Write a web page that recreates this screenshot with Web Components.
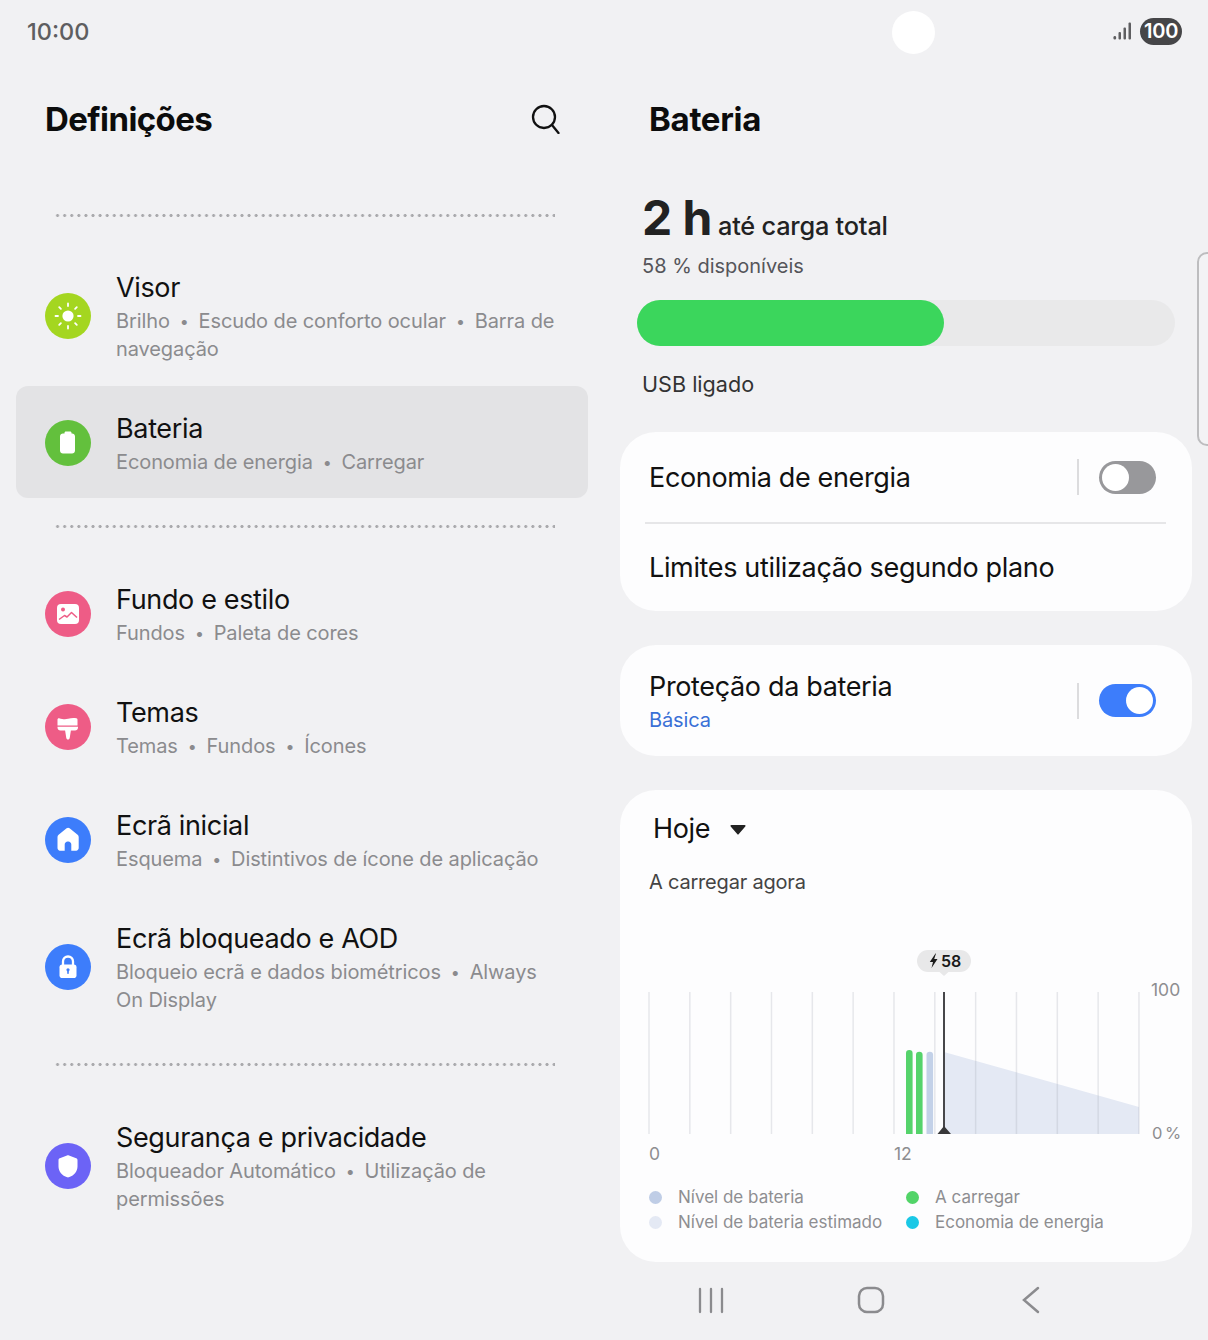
<!doctype html>
<html lang="pt">
<head>
<meta charset="utf-8">
<title>Definições</title>
<style>
  html,body{margin:0;background:#f1f1f3}
  body{font-family:Inter,"Noto Sans",sans-serif}
  settings-row i{font-style:normal;font-size:16px;line-height:1;margin:0 5.500px;vertical-align:1px}
</style>
</head>
<body>
<app-shell>
  <status-bar slot="status"></status-bar>

  <settings-pane slot="left">
    <dot-divider first></dot-divider>
    <settings-row>
      <round-icon slot="icon" kind="sun" color="#a4d620"></round-icon>
      <span slot="title">Visor</span>
      <span slot="sub">Brilho<i>&nbsp;•&nbsp;</i>Escudo de conforto ocular<i>&nbsp;•&nbsp;</i>Barra de<br>navegação</span>
    </settings-row>
    <settings-row selected>
      <round-icon slot="icon" kind="battery" color="#63c03d"></round-icon>
      <span slot="title">Bateria</span>
      <span slot="sub">Economia de energia<i>&nbsp;•&nbsp;</i>Carregar</span>
    </settings-row>
    <dot-divider></dot-divider>
    <settings-row>
      <round-icon slot="icon" kind="picture" color="#ee5c86"></round-icon>
      <span slot="title">Fundo e estilo</span>
      <span slot="sub">Fundos<i>&nbsp;•&nbsp;</i>Paleta de cores</span>
    </settings-row>
    <settings-row>
      <round-icon slot="icon" kind="brush" color="#ee5c86"></round-icon>
      <span slot="title">Temas</span>
      <span slot="sub">Temas<i>&nbsp;•&nbsp;</i>Fundos<i>&nbsp;•&nbsp;</i>Ícones</span>
    </settings-row>
    <settings-row>
      <round-icon slot="icon" kind="home" color="#3d7dfb"></round-icon>
      <span slot="title">Ecrã inicial</span>
      <span slot="sub">Esquema<i>&nbsp;•&nbsp;</i>Distintivos de ícone de aplicação</span>
    </settings-row>
    <settings-row>
      <round-icon slot="icon" kind="lock" color="#3d7dfb"></round-icon>
      <span slot="title">Ecrã bloqueado e AOD</span>
      <span slot="sub">Bloqueio ecrã e dados biométricos<i>&nbsp;•&nbsp;</i>Always<br>On Display</span>
    </settings-row>
    <dot-divider></dot-divider>
    <settings-row>
      <round-icon slot="icon" kind="shield" color="#6c63f6"></round-icon>
      <span slot="title">Segurança e privacidade</span>
      <span slot="sub">Bloqueador Automático<i>&nbsp;•&nbsp;</i>Utilização de<br>permissões</span>
    </settings-row>
  </settings-pane>

  <battery-pane slot="right"></battery-pane>
</app-shell>

<script>
const FONT = 'Inter,"Noto Sans",sans-serif';

class AppShell extends HTMLElement {
  constructor() {
    super();
    this.attachShadow({ mode: "open" }).innerHTML = `
      <style>
        :host{display:block;position:relative;width:1208px;height:1340px;overflow:hidden;background:#f1f1f3;font-family:${FONT}}
        .cols{display:grid;grid-template-columns:572px 572px;column-gap:32px;padding-left:16px}
        .camera{position:absolute;left:892px;top:11px;width:43px;height:43px;border-radius:50%;background:#fff}
        .handle{position:absolute;left:1197px;top:252px;width:14px;height:190px;border:2px solid #bdbdbf;border-radius:10px 0 0 10px;background:#f3f3f5}
      </style>
      <slot name="status"></slot>
      <div class="cols"><slot name="left"></slot><slot name="right"></slot></div>
      <div class="camera"></div>
      <div class="handle"></div>
    `;
  }
}

class StatusBar extends HTMLElement {
  constructor() {
    super();
    this.attachShadow({ mode: "open" }).innerHTML = `
      <style>
        :host{display:flex;align-items:center;justify-content:space-between;height:62px;padding:0 26px 0 27px;color:#5e5e60}
        .time{font-size:23.500px;font-weight:500}
        .right{display:flex;align-items:center;gap:8px}
        .batt{background:#464648;color:#fff;border-radius:14px;height:27px;width:42px;display:flex;align-items:center;justify-content:center;font-size:20px;font-weight:600;letter-spacing:-.2px}
      </style>
      <span class="time">10:00</span>
      <div class="right">
        <svg width="19" height="20" viewBox="0 0 19 20" fill="#5e5e60">
          <rect x="0.500" y="15" width="2.600" height="3.400" rx="1.200"/>
          <rect x="5.500" y="11" width="2.500" height="7.400" rx="1"/>
          <rect x="10.500" y="6.500" width="2.500" height="11.900" rx="1"/>
          <rect x="15.500" y="1.500" width="2.500" height="16.900" rx="1"/>
        </svg>
        <span class="batt">100</span>
      </div>
    `;
  }
}

class SettingsPane extends HTMLElement {
  constructor() {
    super();
    this.attachShadow({ mode: "open" }).innerHTML = `
      <style>
        :host{display:block}
        header{display:flex;align-items:center;justify-content:space-between;height:114px;padding:0 28px 0 29px;box-sizing:border-box}
        h1{margin:0;font-size:33px;font-weight:700;color:#0c0c0c;letter-spacing:-.6px}
      </style>
      <header>
        <h1>Definições</h1>
        <svg width="30" height="30" viewBox="0 0 30 30" fill="none" stroke="#111" stroke-width="2.300" stroke-linecap="round">
          <circle cx="14" cy="13" r="11"/><path d="M22 21 28.500 29"/>
        </svg>
      </header>
      <slot></slot>
    `;
  }
}

class DotDivider extends HTMLElement {
  constructor() {
    super();
    this.attachShadow({ mode: "open" }).innerHTML = `
      <style>
        :host{display:block;height:58px;padding:26px 33px 0 37.500px;box-sizing:border-box}
        :host([first]){height:69px;padding-top:38px}
        div{height:3px;background:radial-gradient(circle at center,#a9a9ac 1.200px,transparent 1.800px) left center/7.100px 3px repeat-x}
      </style>
      <div></div>
    `;
  }
}

class SettingsRow extends HTMLElement {
  constructor() {
    super();
    this.attachShadow({ mode: "open" }).innerHTML = `
      <style>
        :host{display:flex;align-items:center;gap:25px;padding:23.500px 28px 22.500px 29px;margin-bottom:1px;border-radius:12px}
        :host([selected]){background:#e3e3e5}
        .txt{flex:1;min-width:0}
        .t{font-size:27px;letter-spacing:-.35px;line-height:37px;color:#111}
        .s{font-size:20px;letter-spacing:-.1px;line-height:28px;color:#8b8b8e;margin-top:1px}
      </style>
      <slot name="icon"></slot>
      <div class="txt">
        <div class="t"><slot name="title"></slot></div>
        <div class="s"><slot name="sub"></slot></div>
      </div>
    `;
  }
}

const ICONS = {
  sun: (c) => `
    <circle cx="23" cy="23" r="5.600" fill="#fff"/>
    <g stroke="#fff" stroke-width="1.800" stroke-linecap="round">
      <path d="M23 10.500v2.500M23 33v2.500M10.500 23H13M33 23h2.500M14.200 14.200l1.700 1.700M30.100 30.100l1.700 1.700M14.200 31.800l1.700-1.700M30.100 15.900l1.700-1.700"/>
    </g>`,
  battery: (c) => `
    <path fill="#fff" d="M19.500 13.500v-.6c0-.8.6-1.400 1.400-1.400h4.200c.8 0 1.400.6 1.400 1.400v.6h.5c1.700 0 3 1.300 3 3V30.500c0 1.700-1.300 3-3 3h-9c-1.700 0-3-1.300-3-3V16.500c0-1.700 1.300-3 3-3z"/>`,
  picture: (c) => `
    <rect x="12" y="13" width="22" height="20" rx="4" fill="#fff"/>
    <circle cx="18" cy="18.500" r="2" fill="${c}"/>
    <path d="M14 28.500l5.500-4 2.500 1.500 4.500-4.500 5.500 5" fill="none" stroke="${c}" stroke-width="1.500" stroke-linejoin="round"/>`,
  brush: (c) => `
    <path fill="#fff" d="M12.500 15.500c0-.8.7-1.500 1.600-1.300 3.400.8 5.400 1.600 9 .6 3.500-1 6-.9 8.300-.5.800.1 1.100.7 1.100 1.400v5.800H12.500z"/>
    <path fill="#fff" d="M12.500 22.800h20.500v.7c0 1.700-1.300 3-3 3h-4.100l-1.200 7.500c-.1.900-.8 1.500-1.600 1.500h-.2c-.8 0-1.500-.6-1.600-1.500L20.100 26.500h-4.600c-1.700 0-3-1.300-3-3z"/>`,
  home: (c) => `
    <path fill="#fff" fill-rule="evenodd" d="M21.600 11.300c.9-.7 2.100-.7 3 0l8 6.500c.7.600 1.100 1.400 1.100 2.300v11c0 1.400-1.100 2.600-2.500 2.600h-4.900v-6.200c0-1.600-1.300-3-3-3h-.6c-1.600 0-3 1.400-3 3v6.200H15c-1.400 0-2.500-1.200-2.500-2.600v-11c0-.9.400-1.700 1.100-2.300z"/>`,
  lock: (c) => `
    <path fill="none" stroke="#fff" stroke-width="2.300" d="M18 22v-4.500c0-2.900 2.200-5 5-5s5 2.100 5 5V22"/>
    <rect x="14.500" y="20.500" width="17" height="13.500" rx="2.800" fill="#fff"/>
    <circle cx="23" cy="25.800" r="1.600" fill="${c}"/>
    <rect x="22.200" y="26" width="1.600" height="4" rx=".8" fill="${c}"/>`,
  shield: (c) => `
    <path fill="#fff" d="M22 12.500c.6-.3 1.400-.3 2 0l7.200 2.700c.9.300 1.300 1.100 1.300 2v6.300c0 5.100-3.700 9.200-8.700 10.800-.5.200-1.100.2-1.600 0-5-1.600-8.700-5.700-8.700-10.800v-6.300c0-.9.400-1.700 1.300-2z"/>`,
};

class RoundIcon extends HTMLElement {
  connectedCallback() {
    const color = this.getAttribute("color");
    const draw = ICONS[this.getAttribute("kind")];
    if (!this.shadowRoot) this.attachShadow({ mode: "open" });
    this.shadowRoot.innerHTML = `
      <style>:host{display:block;width:46px;height:46px;flex:none}svg{display:block}</style>
      <svg width="46" height="46" viewBox="0 0 46 46">
        <circle cx="23" cy="23" r="23" fill="${color}"/>${draw(color)}
      </svg>
    `;
  }
}

class WhiteCard extends HTMLElement {
  constructor() {
    super();
    this.attachShadow({ mode: "open" }).innerHTML = `
      <style>:host{display:block;background:#fdfdfe;border-radius:36px;margin-bottom:34px}</style>
      <slot></slot>
    `;
  }
}

class ToggleRow extends HTMLElement {
  constructor() {
    super();
    this.attachShadow({ mode: "open" }).innerHTML = `
      <style>
        :host{display:flex;align-items:center;justify-content:space-between;padding-left:29px;padding-right:36px;box-sizing:border-box;color:#111}
        .w{padding-top:2px}
        :host([plain]) .w{padding-top:0}
        .t{font-size:27px;letter-spacing:-.35px;line-height:36px}
        ::slotted([slot="sub"]){display:block;font-size:20px;letter-spacing:-.1px;line-height:28px;color:#3a70d6;margin-top:1px}
        .end{display:flex;align-items:center;gap:20px}
        .bar{width:2px;height:36px;background:#dcdcde}
        .sw{width:57px;height:33px;border-radius:17px;box-sizing:border-box;padding:3px;display:flex;background:#98989b}
        .k{width:27px;height:27px;border-radius:50%;background:#fff}
        :host([on]) .sw{background:#3d7dfb;justify-content:flex-end}
        :host([plain]) .end{display:none}
      </style>
      <div class="w"><div class="t"><slot></slot></div><slot name="sub"></slot></div>
      <div class="end"><div class="bar"></div><div class="sw"><div class="k"></div></div></div>
    `;
  }
}

class UsageChart extends HTMLElement {
  constructor() {
    super();
    let grid = "";
    for (let i = 0; i < 13; i++) {
      const x = 29 + i * 40.83;
      grid += `<line x1="${x}" x2="${x}" y1="47" y2="189"/>`;
    }
    this.attachShadow({ mode: "open" }).innerHTML = `
      <style>
        :host{display:block}
        svg{display:block}
        text{font-family:${FONT};font-size:17.500px;fill:#8d8d90}
        .v{font-size:16px;font-weight:600;fill:#1a1a1a}
        .p{font-size:16.500px;word-spacing:-2px}
      </style>
      <svg width="572" height="225" viewBox="0 0 572 225">
        <path d="M324 107 519 162V189H324Z" fill="#e4e9f4"/>
        <g stroke="#a0a4b0" stroke-opacity=".24" stroke-width="1.500">${grid}</g>
        <path d="M286 189V108.300a3.300 3.300 0 0 1 6.600 0V189Z" fill="#55d36b"/>
        <path d="M296 189V110a3.300 3.300 0 0 1 6.600 0V189Z" fill="#55d36b"/>
        <path d="M306.500 189V110a3.300 3.300 0 0 1 6.600 0V189Z" fill="#c3d1e8"/>
        <rect x="297" y="5" width="54" height="22" rx="11" fill="#e8e8e9"/>
        <path d="M319.500 27h9l-4.500 4z" fill="#e8e8e9"/>
        <path d="M315.500 8.500 309.800 17h3.200l-1.500 6 6-9h-3.300l1.800-5.500z" fill="#1a1a1a"/>
        <text class="v" x="321" y="21.500">58</text>
        <rect x="323" y="47" width="2" height="142" fill="#47474a"/>
        <path d="M324 181 331 189H317.500Z" fill="#38383a"/>
        <text x="531" y="51">100</text>
        <text class="p" x="532" y="194">0 %</text>
        <text x="29" y="215">0</text>
        <text x="274" y="215">12</text>
      </svg>
    `;
  }
}

class ChartLegend extends HTMLElement {
  constructor() {
    super();
    const items = [
      ["#bfcde6", "Nível de bateria"],
      ["#52d468", "A carregar"],
      ["#e4e9f4", "Nível de bateria estimado"],
      ["#1ac8e6", "Economia de energia"],
    ];
    this.attachShadow({ mode: "open" }).innerHTML = `
      <style>
        :host{display:grid;grid-template-columns:257px auto;justify-content:start;padding:15px 0 0 29px;font-size:17px;line-height:25px;color:#8e8e91}
        .i{display:flex;align-items:center;gap:16px;white-space:nowrap}
        .d{width:13px;height:13px;border-radius:50%}
      </style>
      ${items.map((i) => `<div class="i"><span class="d" style="background:${i[0]}"></span>${i[1]}</div>`).join("")}
    `;
  }
}

class NavBar extends HTMLElement {
  constructor() {
    super();
    this.attachShadow({ mode: "open" }).innerHTML = `
      <style>
        :host{display:flex;align-items:center;justify-content:center;height:76px;padding-right:70px}
        svg{display:block}
        .c{width:160px;display:flex;justify-content:center}
      </style>
      <div class="c"><svg width="26" height="28" viewBox="0 0 26 28" stroke="#8b8b8e" stroke-width="2.300" stroke-linecap="round"><path d="M2 3v23M13 3v23M24 3v23"/></svg></div>
      <div class="c"><svg width="28" height="28" viewBox="0 0 28 28" fill="none" stroke="#8b8b8e" stroke-width="2.500"><rect x="2" y="2" width="24" height="24" rx="8"/></svg></div>
      <div class="c"><svg width="20" height="28" viewBox="0 0 20 28" fill="none" stroke="#8b8b8e" stroke-width="2.500" stroke-linecap="round"><path d="M17 2 3 14l14 12"/></svg></div>
    `;
  }
}

class BatteryPane extends HTMLElement {
  constructor() {
    super();
    this.attachShadow({ mode: "open" }).innerHTML = `
      <style>
        :host{display:block;color:#111}
        h1{margin:0;height:114px;padding:0 0 0 29px;box-sizing:border-box;display:flex;align-items:center;font-size:33px;font-weight:700;color:#0c0c0c;letter-spacing:-.3px}
        .sum{padding-left:23px;height:256px;box-sizing:border-box}
        .big{display:flex;align-items:baseline;gap:6px;height:70px;padding-top:11px;box-sizing:border-box;font-weight:500;color:#222}
        .big b{font-size:48px;font-weight:700;line-height:62px;letter-spacing:-.5px;margin-left:-1px}
        .big span{font-size:25.300px;letter-spacing:-.2px}
        .pct{font-size:20px;line-height:28px;color:#55555a;margin-top:6px;margin-left:-1px}
        .track{height:46px;width:538px;margin:20px 0 0 -6px;border-radius:23px;background:#e9e9ea}
        .fill{width:307px;height:100%;border-radius:23px;background:#3bd65c}
        .usb{font-size:21.600px;line-height:28px;color:#333;margin:24px 0 0 -1px}
        .hr{height:2px;background:#e6e6e8;margin:0 26px 0 25px}
        .hoje{display:flex;align-items:center;gap:20px;font-size:27px;letter-spacing:-.35px;line-height:36px;padding:21px 0 0 33px}
        .now{font-size:20px;letter-spacing:-.2px;line-height:28px;color:#444;padding:21px 0 0 29px}
        .head{height:155px;box-sizing:border-box}
      </style>
      <h1>Bateria</h1>
      <div class="sum">
        <div class="big"><b>2 h</b><span>até carga total</span></div>
        <div class="pct">58 % disponíveis</div>
        <div class="track"><div class="fill"></div></div>
        <div class="usb">USB ligado</div>
      </div>
      <white-card>
        <toggle-row style="height:90px">Economia de energia</toggle-row>
        <div class="hr"></div>
        <toggle-row plain style="height:87px">Limites utilização segundo plano</toggle-row>
      </white-card>
      <white-card>
        <toggle-row on style="height:111px">Proteção da bateria<span slot="sub">Básica</span></toggle-row>
      </white-card>
      <white-card style="margin-bottom:0;height:472px">
        <div class="head">
          <div class="hoje">Hoje <svg width="16" height="11" viewBox="0 0 16 11"><path d="M1.500 1h13a1 1 0 0 1 .8 1.500L8.800 10a1 1 0 0 1-1.600 0L.7 2.500A1 1 0 0 1 1.500 1z" fill="#222"/></svg></div>
          <div class="now">A carregar agora</div>
        </div>
        <usage-chart></usage-chart>
        <chart-legend></chart-legend>
      </white-card>
      <nav-bar></nav-bar>
    `;
  }
}

customElements.define("white-card", WhiteCard);
customElements.define("toggle-row", ToggleRow);
customElements.define("usage-chart", UsageChart);
customElements.define("chart-legend", ChartLegend);
customElements.define("nav-bar", NavBar);
customElements.define("round-icon", RoundIcon);
customElements.define("dot-divider", DotDivider);
customElements.define("settings-row", SettingsRow);
customElements.define("settings-pane", SettingsPane);
customElements.define("battery-pane", BatteryPane);
customElements.define("status-bar", StatusBar);
customElements.define("app-shell", AppShell);
</script>
</body>
</html>
